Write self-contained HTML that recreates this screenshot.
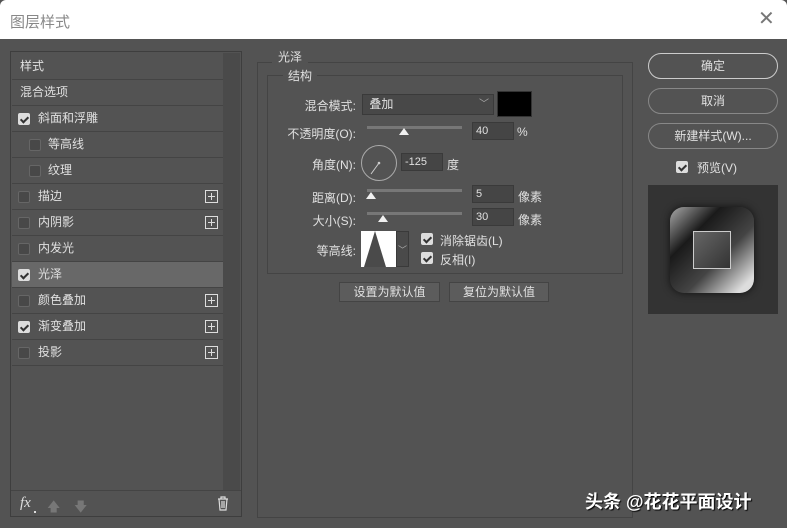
<!DOCTYPE html>
<html><head><meta charset="utf-8"><style>
*{margin:0;padding:0;box-sizing:border-box}
body{width:787px;height:528px;background:#535353;font-family:"Liberation Sans","Noto Sans CJK SC",sans-serif;font-size:12px;color:#e0e0e0;position:relative;overflow:hidden}
.a{position:absolute}
.title{left:0;top:0;width:787px;height:39px;background:#fff;color:#888;font-size:15px;padding:11px 0 0 10px;border-radius:6px 6px 0 0}
.row{position:absolute;left:12px;width:211px;height:26px;border-bottom:1px solid #444;background:#535353;line-height:25px}
.cb{position:absolute;width:12px;height:12px;border:1px solid #666;background:#484848;border-radius:2px;top:7px}
.cb.on{background:#ddd;border-color:#ddd}
.cb.on:after{content:"";position:absolute;left:3px;top:1px;width:3px;height:6px;border:solid #333;border-width:0 2px 2px 0;transform:rotate(45deg)}
.plus{position:absolute;left:193px;top:6px;width:13px;height:13px;border:1px solid #ddd}
.plus:before{content:"";position:absolute;left:2px;top:5px;width:7px;height:1px;background:#ddd}
.plus:after{content:"";position:absolute;left:5px;top:2px;width:1px;height:7px;background:#ddd}
.btn{position:absolute;left:648px;width:130px;height:26px;border:1px solid #888;border-radius:13px;text-align:center;line-height:24px;font-size:12px}
.inp{position:absolute;background:#454545;border:1px solid #3a3a3a;height:18px;line-height:16px;padding-left:3px;font-size:11px}
.lbl{position:absolute;text-align:right;width:100px}
.sl{position:absolute;height:3px;background:#777;left:367px;width:95px}
.th{position:absolute;width:0;height:0;border-left:5px solid transparent;border-right:5px solid transparent;border-bottom:7px solid #f0f0f0}
.sb{position:absolute;height:20px;border:1px solid #444;background:#5c5c5c;text-align:center;line-height:18px}
</style></head><body>
<div class="a title">图层样式</div>
<div class="a" style="left:758px;top:10px;font-size:20px;color:#777;line-height:18px">✕</div>
<div class="a" style="left:10px;top:51px;width:232px;height:466px;border:1px solid #3e3e3e;background:#535353"></div>
<div class="a" style="left:223px;top:53px;width:17px;height:437px;background:#4a4a4a"></div>
<div class="a" style="left:11px;top:490px;width:230px;height:1px;background:#444"></div>
<div class="row" style="top:54px"><span style="margin-left:8px">样式</span></div>
<div class="row" style="top:80px"><span style="margin-left:8px">混合选项</span></div>
<div class="row" style="top:106px"><div class="cb on" style="left:6px"></div><span style="margin-left:26px">斜面和浮雕</span></div>
<div class="row" style="top:132px"><div class="cb" style="left:17px"></div><span style="margin-left:36px">等高线</span></div>
<div class="row" style="top:158px"><div class="cb" style="left:17px"></div><span style="margin-left:36px">纹理</span></div>
<div class="row" style="top:184px"><div class="cb" style="left:6px"></div><span style="margin-left:26px">描边</span><div class="plus"></div></div>
<div class="row" style="top:210px"><div class="cb" style="left:6px"></div><span style="margin-left:26px">内阴影</span><div class="plus"></div></div>
<div class="row" style="top:236px"><div class="cb" style="left:6px"></div><span style="margin-left:26px">内发光</span></div>
<div class="row" style="top:262px;background:#686868"><div class="cb on" style="left:6px"></div><span style="margin-left:26px">光泽</span></div>
<div class="row" style="top:288px"><div class="cb" style="left:6px"></div><span style="margin-left:26px">颜色叠加</span><div class="plus"></div></div>
<div class="row" style="top:314px"><div class="cb on" style="left:6px"></div><span style="margin-left:26px">渐变叠加</span><div class="plus"></div></div>
<div class="row" style="top:340px"><div class="cb" style="left:6px"></div><span style="margin-left:26px">投影</span><div class="plus"></div></div>
<div class="a" style="left:20px;top:495px;font-style:italic;font-family:'Liberation Serif',serif;font-size:15px;color:#ddd">fx</div>
<div class="a" style="left:34px;top:511px;width:2px;height:2px;background:#ddd"></div>
<div class="a" style="left:47px;top:498px;color:#777;font-size:13px">🡅</div>
<div class="a" style="left:74px;top:498px;color:#777;font-size:13px">🡇</div>
<svg class="a" style="left:217px;top:496px" width="12" height="15"><path d="M1 3h10M4 3V1h4v2M2 3l1 11h6l1-11M5 5v7M7 5v7" stroke="#ddd" fill="none" stroke-width="1.2"/></svg>
<div class="a" style="left:257px;top:62px;width:376px;height:456px;border:1px solid #444"></div>
<div class="a" style="left:272px;top:48px;background:#535353;padding:0 6px">光泽</div>
<div class="a" style="left:267px;top:75px;width:356px;height:199px;border:1px solid #444"></div>
<div class="a" style="left:283px;top:67px;background:#535353;padding:0 5px">结构</div>
<div class="lbl" style="left:256px;top:97px">混合模式:</div>
<div class="inp" style="left:362px;top:94px;width:132px;height:21px;line-height:19px;font-size:12px;background:#484848">&nbsp;叠加<span style="position:absolute;right:4px;color:#aaa;font-size:10px">﹀</span></div>
<div class="a" style="left:497px;top:91px;width:35px;height:26px;background:#000;border:1px solid #333"></div>
<div class="lbl" style="left:256px;top:125px">不透明度(O):</div>
<div class="sl" style="top:126px"></div><div class="th" style="left:399px;top:128px"></div>
<div class="inp" style="left:472px;top:122px;width:42px">40</div>
<div class="a" style="left:517px;top:125px">%</div>
<div class="lbl" style="left:256px;top:156px">角度(N):</div>
<div class="a" style="left:361px;top:145px;width:36px;height:36px;border:1px solid #aaa;border-radius:50%"></div>
<svg class="a" style="left:361px;top:145px" width="36" height="36"><line x1="18" y1="18" x2="10" y2="29" stroke="#ccc" stroke-width="1"/><circle cx="18" cy="18" r="1.3" fill="#ccc"/></svg>
<div class="inp" style="left:401px;top:153px;width:42px">-125</div>
<div class="a" style="left:447px;top:156px">度</div>
<div class="lbl" style="left:256px;top:189px">距离(D):</div>
<div class="sl" style="top:189px"></div><div class="th" style="left:366px;top:192px"></div>
<div class="inp" style="left:472px;top:185px;width:42px">5</div>
<div class="a" style="left:518px;top:188px">像素</div>
<div class="lbl" style="left:256px;top:212px">大小(S):</div>
<div class="sl" style="top:212px"></div><div class="th" style="left:378px;top:215px"></div>
<div class="inp" style="left:472px;top:208px;width:42px">30</div>
<div class="a" style="left:518px;top:211px">像素</div>
<div class="lbl" style="left:256px;top:242px">等高线:</div>
<svg class="a" style="left:361px;top:231px" width="36" height="36"><rect width="36" height="36" fill="#fff"/><path d="M3 36L14 0L25 36Z" fill="#4a4a4a"/></svg>
<div class="a" style="left:396px;top:231px;width:13px;height:36px;background:#4a4a4a;border:1px solid #3a3a3a;color:#aaa;font-size:9px;padding-top:11px;text-align:center">﹀</div>
<div class="cb on a" style="left:421px;top:233px"></div><div class="a" style="left:440px;top:232px">消除锯齿(L)</div>
<div class="cb on a" style="left:421px;top:252px"></div><div class="a" style="left:440px;top:251px">反相(I)</div>
<div class="sb" style="left:339px;top:282px;width:101px">设置为默认值</div>
<div class="sb" style="left:449px;top:282px;width:100px">复位为默认值</div>
<div class="btn" style="top:53px;border-color:#ccc">确定</div>
<div class="btn" style="top:88px">取消</div>
<div class="btn" style="top:123px">新建样式(W)...</div>
<div class="cb on a" style="left:676px;top:161px"></div><div class="a" style="left:697px;top:159px">预览(V)</div>
<div class="a" style="left:648px;top:185px;width:130px;height:129px;background:#333"></div>
<div class="a" style="left:670px;top:207px;width:84px;height:86px;border-radius:14px;background:linear-gradient(135deg,#aaa 0%,#1a1a1a 30%,#444 60%,#ddd 90%);box-shadow:0 0 8px #111"></div>
<div class="a" style="left:693px;top:231px;width:38px;height:38px;border:1px solid #ccc;background:linear-gradient(135deg,#666,#333)"></div>
<div class="a" style="left:585px;top:488px;font-size:18px;font-weight:bold;color:#fff;text-shadow:1px 1px 1px #000">头条 @花花平面设计</div>
</body></html>
